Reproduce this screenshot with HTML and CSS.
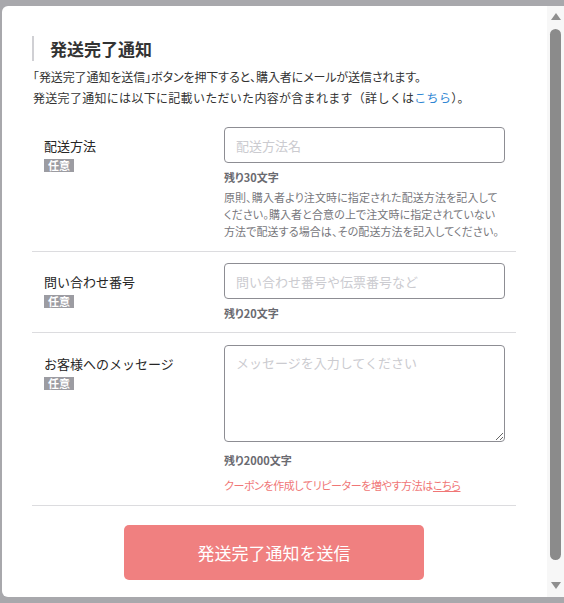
FILE: index.html
```html
<!DOCTYPE html>
<html lang="ja">
<head>
<meta charset="utf-8">
<title>発送完了通知</title>
<link rel="stylesheet" href="styles.css">
</head>
<body>
<div class="modal">
  <div class="content">
    <h2 class="title">発送完了通知</h2>
    <p class="desc"><span class="desc-l1"><span class="halt">「</span>発送完了通知を送信<span class="halt">」</span>ボタンを押下すると<span class="halt">、</span>購入者にメールが送信されます。</span><br><span class="desc-l2">発送完了通知には以下に記載いただいた内容が含まれます（詳しくは<a class="link" href="#">こちら</a>）。</span></p>

    <div class="row">
      <div class="label-col">
        <div class="label">配送方法</div>
        <span class="badge">任意</span>
      </div>
      <div class="field-col">
        <input class="input" type="text" placeholder="配送方法名">
        <div class="counter">残り30文字</div>
        <p class="help">原則、購入者より注文時に指定された配送方法を記入して<br>ください。購入者と合意の上で注文時に指定されていない<br>方法で配送する場合は、その配送方法を記入してください。</p>
      </div>
    </div>

    <div class="row">
      <div class="label-col">
        <div class="label">問い合わせ番号</div>
        <span class="badge">任意</span>
      </div>
      <div class="field-col">
        <input class="input" type="text" placeholder="問い合わせ番号や伝票番号など">
        <div class="counter">残り20文字</div>
      </div>
    </div>

    <div class="row row-msg">
      <div class="label-col">
        <div class="label">お客様へのメッセージ</div>
        <span class="badge">任意</span>
      </div>
      <div class="field-col">
        <textarea class="textarea" placeholder="メッセージを入力してください"></textarea>
        <div class="counter counter-ta">残り2000文字</div>
        <p class="coupon">クーポンを作成してリピーターを増やす方法は<a class="coupon-link" href="#">こちら</a></p>
      </div>
    </div>

    <div class="actions">
      <button class="submit" type="button">発送完了通知を送信</button>
    </div>
  </div>
  <div class="scrollbar">
    <span class="arrow arrow-up"></span>
    <span class="thumb"></span>
    <span class="arrow arrow-down"></span>
  </div>
</div>
</body>
</html>
```

FILE: styles.css
```css
* { box-sizing: border-box; }

html, body {
  margin: 0;
  padding: 0;
  height: 100%;
  overflow: hidden;
}

body {
  background: #a8a8ac;
  font-family: "Noto Sans CJK JP", "Noto Sans", sans-serif;
  color: #333;
}

.modal {
  margin: 6px 0 0 2px;
  width: 562px;
  height: 591px;
  background: #fff;
  border-radius: 6px 0 0 6px;
  display: flex;
  overflow: hidden;
}

.content {
  flex: 1;
  padding: 30px 31px 0 30px;
}

.title {
  margin: 0;
  height: 25px;
  border-left: 2px solid #d0d0d4;
  padding-left: 16px;
  font-size: 17px;
  line-height: 25px;
  font-weight: 700;
  color: #333;
}

.desc {
  margin: 5px 0 8px 1px;
  font-size: 12px;
  line-height: 21px;
  color: #333;
  white-space: nowrap;
}

.desc-l1 { font-feature-settings: "palt"; letter-spacing: -0.1px; }
.desc-l2 { letter-spacing: 0.3px; }

.halt { font-feature-settings: "halt"; }

.link {
  color: #2f86d3;
  text-decoration: none;
}

.row {
  display: flex;
  padding: 11px 0 11px;
  border-bottom: 1px solid #dcdcdf;
}

.row-msg { padding: 12px 0 12px; }

.label-col {
  width: 192px;
  padding: 9px 0 0 12px;
  display: flex;
  flex-direction: column;
  align-items: flex-start;
}

.label {
  font-size: 13px;
  line-height: 20px;
  color: #262626;
}

.badge {
  margin-top: 3px;
  height: 13px;
  padding: 0 4px;
  background: #9c9ca2;
  color: #fff;
  font-size: 11px;
  line-height: 13px;
  font-weight: 700;
}

.field-col {
  width: 281px;
  display: flex;
  flex-direction: column;
}

.input, .textarea {
  width: 281px;
  border: 1px solid #8d8d93;
  border-radius: 4px;
  font-family: inherit;
  font-size: 13px;
  color: #333;
  padding: 0 11px;
  outline: none;
  margin: 0;
}

.input { height: 36px; }

.textarea {
  display: block;
  height: 97px;
  padding-top: 7px;
  line-height: 20px;
  resize: vertical;
}

.input::placeholder, .textarea::placeholder { color: #cbcbd0; }

.counter {
  margin-top: 6px;
  font-size: 11px;
  line-height: 16px;
  font-weight: 700;
  color: #6a6a70;
  font-feature-settings: "palt";
}

.counter-ta { margin-top: 10px; }

.help {
  margin: 4px 0 0;
  font-size: 11px;
  line-height: 17px;
  color: #77777c;
  white-space: nowrap;
  font-feature-settings: "palt";
  letter-spacing: 0.1px;
}

.coupon {
  margin: 9px 0 0;
  font-size: 11px;
  line-height: 16px;
  color: #f07676;
  font-feature-settings: "palt";
  letter-spacing: -0.4px;
}

.coupon-link {
  color: #f07676;
  text-decoration: underline;
}

.actions {
  display: flex;
  justify-content: center;
  padding-top: 19px;
}

.submit {
  width: 300px;
  height: 55px;
  border: 0;
  border-radius: 5px;
  background: #f08080;
  color: #fff;
  font-family: inherit;
  font-size: 17px;
}

.scrollbar {
  width: 17px;
  background: #f7f7f7;
  display: flex;
  flex-direction: column;
  align-items: center;
  padding: 7px 0 6px;
}

.arrow {
  width: 0;
  height: 0;
  border-left: 5px solid transparent;
  border-right: 5px solid transparent;
}

.arrow-up {
  border-bottom: 7px solid #8f8f8f;
}

.arrow-down {
  border-top: 7px solid #8f8f8f;
  margin-top: 22px;
}

.thumb {
  margin-top: 9px;
  width: 11px;
  height: 531px;
  background: #8b8b8b;
  border-radius: 6px;
}
```
